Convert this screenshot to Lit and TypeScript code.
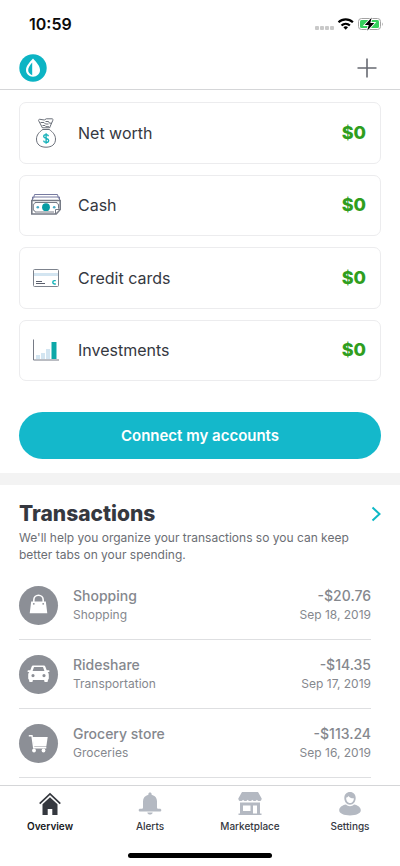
import { LitElement, html, css, svg, TemplateResult } from "lit";
import { customElement, state } from "lit/decorators.js";

interface Account { label: string; amount: string; icon: TemplateResult; }
interface Transaction { name: string; category: string; amount: string; date: string; icon: TemplateResult; }
interface Tab { label: string; icon: TemplateResult; }

const ACCOUNTS: Account[] = [
  {
    label: "Net worth",
    amount: "$0",
    icon: html`<svg viewBox="0 0 32 32" fill="none" stroke="#6a6f79" stroke-width="1">
      <path d="M12.500 11 8.600 3.600c-.3-.8.500-1.400 1.300-1.300l4.400.7 2-1.200h5.700c.8 0 1.200.7.9 1.400L19.500 11"/>
      <path d="M10.500 5.500h3.500l1.500 1.500h3M15.500 4.500h3l1 1.700h2.300M12.500 8.500h2.500l1 1.200h3"/>
      <path d="M12.500 10.800h7M12.500 12.500h7"/>
      <path d="M12.800 12.500c-3.700 2.600-6.300 5.600-6.300 9.500 0 5.400 3.700 8.200 9.500 8.200s9.500-2.800 9.500-8.200c0-3.900-2.600-6.900-6.300-9.500"/>
      <path stroke="#12b0b8" stroke-width="1.300" d="M18.500 19.200c-.3-1-1.200-1.500-2.400-1.500-1.400 0-2.400.7-2.400 1.800 0 2.600 5 1.300 5 4 0 1.100-1 1.900-2.500 1.900s-2.500-.7-2.700-1.700M16.100 16.300v10.500"/></svg>`,
  },
  {
    label: "Cash",
    amount: "$0",
    icon: html`<svg viewBox="0 0 32 32" fill="none" stroke="#767b86" stroke-width="1">
      <path d="M3.500 9.500 4.500 5.500h23l1 4M2.500 11V8h27v3" stroke="#767aa0"/>
      <path fill="#fff" stroke-width="1.600" d="M1.800 11.500h28.400v9l-4 4.500H1.800z"/>
      <path d="M5 13.500h22c0 1.200.6 1.700 1.500 1.700v4.500M5 13.500c0 1-.6 1.700-1.700 1.700v6c1.100 0 1.700.7 1.700 1.800h19"/>
      <path fill="#fff" d="M30 20.500h-4.500V25z"/>
      <circle cx="16" cy="18.200" r="3.900" fill="#079ba3" stroke="none"/>
      <circle cx="7.800" cy="18.200" r="1.300" fill="#45a8c4" stroke="none"/>
      <circle cx="24.200" cy="18.200" r="1.300" fill="#45a8c4" stroke="none"/></svg>`,
  },
  {
    label: "Credit cards",
    amount: "$0",
    icon: html`<svg viewBox="0 0 32 32" fill="none">
      <rect x="3.500" y="7.500" width="25" height="17" rx="1" stroke="#7d838d"/>
      <path fill="#d3e5f1" d="M4 11h24v3H4z"/>
      <path stroke="#5b606d" d="M6 19.500h6M6 21.500h9"/>
      <path stroke="#0fb1b7" stroke-width="1.400" d="M25.800 18.600h-1.300a1.700 1.700 0 0 0 0 3.400h1.300"/></svg>`,
  },
  {
    label: "Investments",
    amount: "$0",
    icon: html`<svg viewBox="0 0 32 32" fill="none">
      <path fill="#d3e5f1" d="M6 21h4v4H6zM11 19h4v6h-4zM16 15h4v10h-4z"/>
      <path fill="#0da8a8" d="M21.500 8h5v17h-5z"/>
      <path stroke="#767b86" d="M3.500 5.500v20.500h25.500"/></svg>`,
  },
];

const TRANSACTIONS: Transaction[] = [
  {
    name: "Shopping", category: "Shopping", amount: "-$20.76", date: "Sep 18, 2019",
    icon: html`<svg viewBox="0 0 39 39">
      <path fill="none" stroke="#fff" stroke-width="1.600" d="M14.800 17.500v-3.500a4.700 4.700 0 0 1 9.400 0v3.500"/>
      <path fill="#fff" d="M12.200 15.500h14.600l1.500 11.700H10.700z"/>
      <circle cx="14.800" cy="17.800" r=".9" fill="#8c8f96"/><circle cx="24.200" cy="17.800" r=".9" fill="#8c8f96"/></svg>`,
  },
  {
    name: "Rideshare", category: "Transportation", amount: "-$14.35", date: "Sep 17, 2019",
    icon: html`<svg viewBox="0 0 39 39">
      <path fill="#fff" fill-rule="evenodd" d="M14.500 10.500h10c1 0 1.600.5 1.900 1.300l1.300 3.500h1.800c.7 0 1 .4 1 .9s-.4.900-1 .9h-.9c.8.800 1.200 1.600 1.200 2.800v3.600c0 .7-.3 1.100-.9 1.300v1c0 .9-.5 1.300-1.200 1.300h-1.200c-.8 0-1.300-.5-1.300-1.300v-.9H13.800v.9c0 .8-.5 1.300-1.300 1.300h-1.200c-.7 0-1.200-.5-1.200-1.300v-1c-.6-.2-.9-.6-.9-1.300v-3.600c0-1.200.4-2 1.200-2.800h-.900c-.6 0-1-.4-1-.9s.4-.9 1-.9h1.800l1.300-3.500c.3-.8.900-1.300 1.900-1.300zM15 12l-1.400 4h11.800L24 12zM14 19a1.600 1.600 0 1 0 0 3.200A1.600 1.600 0 0 0 14 19zM25 19a1.600 1.600 0 1 0 0 3.200A1.600 1.600 0 0 0 25 19z"/></svg>`,
  },
  {
    name: "Grocery store", category: "Groceries", amount: "-$113.24", date: "Sep 16, 2019",
    icon: html`<svg viewBox="0 0 39 39">
      <path fill="none" stroke="#fff" stroke-width="1.400" d="M9.800 11.700h3.200l1.700 12h12.600"/>
      <path fill="#fff" d="M13.500 13h15.200l-1.400 9.500H14.700z"/>
      <circle cx="15" cy="26.500" r="1.900" fill="#fff"/><circle cx="24.500" cy="26.500" r="1.900" fill="#fff"/></svg>`,
  },
];

const TABS: Tab[] = [
  {
    label: "Overview",
    icon: html`<svg viewBox="0 0 24 24">
      <path fill="none" stroke="currentColor" stroke-width="1.700" d="M1.700 11.600 12 1.900l10.300 9.700"/>
      <path fill="currentColor" d="M12 5.200 4.500 12.200V23h5.200v-6h4.600v6h5.200V12.200z"/></svg>`,
  },
  {
    label: "Alerts",
    icon: html`<svg viewBox="0 0 24 24">
      <path fill="currentColor" d="M12 .5c1 0 1.600.7 1.600 1.600v.6c3.300.8 5.400 3.300 5.400 6.600v6c0 1 .5 1.500 1.500 1.500h1.300c.9 0 1.500.6 1.500 1.400s-.6 1.400-1.500 1.400H2.200c-.9 0-1.500-.6-1.500-1.400s.6-1.400 1.500-1.400h1.300c1 0 1.500-.5 1.500-1.500v-6c0-3.300 2.100-5.800 5.400-6.600v-.6C10.400 1.200 11 .5 12 .5zM9.300 20.400h5.400c-.3 1.400-1.300 2.200-2.700 2.200s-2.400-.8-2.700-2.200z"/></svg>`,
  },
  {
    label: "Marketplace",
    icon: html`<svg viewBox="0 0 24 24">
      <path fill="currentColor" d="M4 0h16l3.700 6.500c0 1.600-1 2.600-2.400 2.600-1 0-1.900-.5-2.400-1.300-.5.800-1.300 1.300-2.300 1.300s-1.800-.5-2.300-1.300c-.5.800-1.300 1.300-2.300 1.300s-1.800-.5-2.300-1.300c-.5.800-1.300 1.300-2.300 1.300s-1.800-.5-2.300-1.300c-.5.800-1.400 1.300-2.400 1.300C1.300 9.100.3 8.100.3 6.500z"/>
      <path fill="currentColor" fill-rule="evenodd" d="M2 10.500h20v11h1.500V23H.500v-1.500H2zM5 13.500V19h7.500v-5.500zM15 13.500v8h4v-8z"/></svg>`,
  },
  {
    label: "Settings",
    icon: html`<svg viewBox="0 0 24 24">
      <path fill="currentColor" fill-rule="evenodd" d="M12 0c3.400 0 5.700 2.500 5.700 6s-2.300 6.700-5.700 6.700S6.300 9.500 6.300 6 8.600 0 12 0zM8.200 5.600c-.2 3 1.400 5.500 3.800 5.500s4-2.300 3.800-4.800c-2.300.2-4.300-.8-5.300-2.300-.4.900-1.200 1.500-2.300 1.600z"/>
      <path fill="currentColor" d="M8 12.500c1.100 1.100 2.400 1.700 4 1.700s2.900-.6 4-1.700c4 .8 6.800 2.900 6.800 5.800 0 3.200-4.800 5.200-10.800 5.200S1.200 21.500 1.200 18.300c0-2.900 2.800-5 6.800-5.800z"/></svg>`,
  },
];

@customElement("status-bar")
export class StatusBar extends LitElement {
  static styles = css`
    :host { display: flex; justify-content: space-between; height: 48px; padding: 0 17px 0 29px; box-sizing: border-box; align-items: center; flex: none; }
    .time { font-size: 16px; line-height: 20px; font-weight: 600; color: #0b0b0b; }
    .signals { display: block; width: 70px; height: 16px; }
  `;
  render() {
    return html`<span class="time">10:59</span>
      <svg class="signals" viewBox="0 0 70 16" aria-hidden="true">
        ${[2, 7, 12, 17].map((x) => svg`<rect x=${x} y="10" width="4" height="4" rx="1" fill="#c9c9c9"/>`)}
        <g fill="none" stroke="#000" stroke-width="2.200">
          <path d="M25.500 6.300a10.500 10.500 0 0 1 14.400 0"/><path d="M28.500 9.500a6.200 6.200 0 0 1 8.400 0"/>
        </g>
        <path d="M30.400 11.200a3.500 3.500 0 0 1 4.600 0l-2.300 2.500z"/>
        <rect x="45.500" y="2.500" width="22" height="11" rx="3" fill="none" stroke="#a3a3a3"/>
        <path d="M69 6.500c1 .4 1 2.900 0 3.300z" fill="#a3a3a3"/>
        <rect x="47" y="4" width="19" height="8" rx="1.500" fill="#35d05c"/>
        <path d="M58.700 1.500 51.800 9h3.900l-1.500 5.800L61.300 7h-4z" stroke="#fff" stroke-width="1.800" paint-order="stroke"/>
      </svg>`;
  }
}

@customElement("app-root")
export class AppRoot extends LitElement {
  @state() private current = "Overview";

  static styles = css`
    :host { display: flex; flex-direction: column; height: 100vh; background: #fff; color: #35383f; font-family: Inter, "Liberation Sans", sans-serif; }
    button { font: inherit; border: 0; background: none; padding: 0; cursor: pointer; color: inherit; }
    svg { display: block; }
    .header { display: flex; flex: none; justify-content: space-between; align-items: center; height: 42px; box-sizing: border-box; padding: 0 20px 2px 19px; border-bottom: 1px solid #d5d6d8; }
    .logo { width: 28px; height: 28px; }
    .add { width: 26px; height: 26px; }
    .content { flex: 1; min-height: 0; overflow-y: auto; scrollbar-width: none; }
    .accounts { display: grid; grid-auto-rows: 1fr; gap: 11px; min-height: 279px; margin: 12px 19px 0; padding: 0; list-style: none; }
    .account { display: flex; align-items: center; box-sizing: border-box; padding: 0 14px 0 10px; border: 1px solid #ececee; border-radius: 7px; }
    .account-icon { width: 32px; height: 32px; margin-right: 16px; }
    .account-icon svg { width: 32px; height: 32px; }
    .account-label { flex: 1; font-size: 16px; line-height: 20px; font-weight: 400; }
    .balance { font-size: 18px; line-height: 22px; font-weight: 800; color: #2f9e1e; }
    .connect-row { display: flex; padding: 31px 19px 14px; }
    .connect { flex: 1; min-height: 47px; border-radius: 24px; background: #14b8cb; color: #fff; font-size: 15px; font-weight: 600; }
    .transactions { border-top: 12px solid #f3f3f3; padding: 16px 19px 0; }
    .title-row { display: flex; justify-content: space-between; align-items: center; }
    .title { margin: 0; font-size: 21px; line-height: 26px; font-weight: 800; }
    .more { width: 10px; height: 16px; }
    .intro { margin: 2px 0 8px; padding-right: 10px; font-size: 12px; line-height: 17px; color: #6b6e74; }
    .list { margin: 0; padding: 0 10px 0 0; list-style: none; }
    .row { display: flex; align-items: center; box-sizing: border-box; height: 69px; border-bottom: 1px solid #dedfe1; color: #85888e; }
    .badge { width: 39px; height: 39px; margin-right: 15px; border-radius: 50%; background: #8c8f96; }
    .details { flex: 1; }
    .figures { text-align: right; }
    .primary, .secondary { display: block; }
    .primary { font-size: 14px; line-height: 20px; font-weight: 500; }
    .secondary { font-size: 12px; line-height: 18px; }
    .tabs { display: flex; flex: none; border-top: 1px solid #d5d6d8; padding-top: 6px; }
    .tab { flex: 1; display: flex; flex-direction: column; align-items: center; gap: 3px; color: #b4b9c2; }
    .tab svg { width: 24px; height: 24px; }
    .tab-label { font-size: 10px; line-height: 14px; font-weight: 500; color: #35383f; }
    .tab.active { color: #35383f; }
    .tab.active .tab-label { font-weight: 600; color: #15171b; }
    .home-indicator { flex: none; width: 36%; height: 5px; border-radius: 3px; background: #000; margin: 20px auto 8px; }
  `;

  render() {
    return html`
      <status-bar></status-bar>
      <header class="header">
        <svg class="logo" viewBox="0 0 28 28" role="img" aria-label="Home">
          <circle cx="14" cy="14" r="13.700" fill="#0cb4c4"/>
          <path fill="#fff" fill-rule="evenodd" d="M14 4.500c3.500 3.700 7 7.500 7 11.600 0 3.900-3 6.700-7 6.700s-7-2.800-7-6.700c0-4.100 3.500-7.900 7-11.600zM13.200 8.500c-2.400 2.800-4 5.200-4 7.600s1.500 4.100 4 5.200z"/>
        </svg>
        <button class="add" aria-label="Add">
          <svg viewBox="0 0 26 26" fill="none" stroke="#676a72" stroke-width="1.600"><path d="M13 3.500v19M3.500 13h19"/></svg>
        </button>
      </header>
      <main class="content">
        <ul class="accounts">
          ${ACCOUNTS.map((a) => html`<li class="account">
            <span class="account-icon">${a.icon}</span>
            <span class="account-label">${a.label}</span>
            <span class="balance">${a.amount}</span>
          </li>`)}
        </ul>
        <div class="connect-row"><button class="connect">Connect my accounts</button></div>
        <section class="transactions">
          <div class="title-row">
            <h2 class="title">Transactions</h2>
            <button class="more" aria-label="See all transactions">
              <svg viewBox="0 0 10 16" fill="none" stroke="#0fb9c6" stroke-width="2"><path d="m1.500 1.500 7 6.500-7 6.500"/></svg>
            </button>
          </div>
          <p class="intro">We'll help you organize your transactions so you can keep better tabs on your spending.</p>
          <ul class="list">
            ${TRANSACTIONS.map((t) => html`<li class="row">
              <span class="badge">${t.icon}</span>
              <span class="details"><span class="primary">${t.name}</span><span class="secondary">${t.category}</span></span>
              <span class="figures"><span class="primary">${t.amount}</span><span class="secondary">${t.date}</span></span>
            </li>`)}
          </ul>
        </section>
      </main>
      <nav class="tabs">
        ${TABS.map((t) => html`<button class="tab ${t.label === this.current ? "active" : ""}" @click=${() => (this.current = t.label)}>
          ${t.icon}<span class="tab-label">${t.label}</span>
        </button>`)}
      </nav>
      <div class="home-indicator"></div>
    `;
  }
}
